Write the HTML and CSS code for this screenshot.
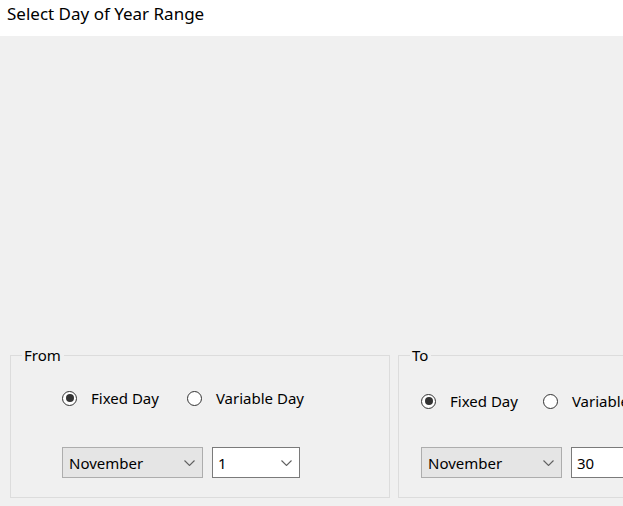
FILE: index.html
```html
<!DOCTYPE html>
<html>
<head>
<meta charset="utf-8">
<link rel="stylesheet" href="styles.css">
</head>
<body>
<div class="window">
  <div class="titlebar">Select Day of Year Range</div>
  <div class="client">
    <fieldset class="group group-from">
      <legend>From</legend>
      <div class="content">
        <div class="radios">
          <label class="radio"><span class="dot checked"></span><span>Fixed Day</span></label>
          <label class="radio"><span class="dot"></span><span>Variable Day</span></label>
        </div>
        <div class="combos">
          <div class="combo combo-month"><span>November</span><svg class="chev" viewBox="0 0 11 6" width="11" height="6"><path d="M0.5 0.5 L5.5 5.5 L10.5 0.5" fill="none" stroke="#606060" stroke-width="1.1"/></svg></div>
          <div class="combo combo-day"><span>1</span><svg class="chev" viewBox="0 0 11 6" width="11" height="6"><path d="M0.5 0.5 L5.5 5.5 L10.5 0.5" fill="none" stroke="#606060" stroke-width="1.1"/></svg></div>
        </div>
      </div>
    </fieldset>
    <fieldset class="group group-to">
      <legend>To</legend>
      <div class="content">
        <div class="radios">
          <label class="radio"><span class="dot checked"></span><span>Fixed Day</span></label>
          <label class="radio"><span class="dot"></span><span>Variable Day</span></label>
        </div>
        <div class="combos">
          <div class="combo combo-month"><span>November</span><svg class="chev" viewBox="0 0 11 6" width="11" height="6"><path d="M0.5 0.5 L5.5 5.5 L10.5 0.5" fill="none" stroke="#606060" stroke-width="1.1"/></svg></div>
          <div class="combo combo-day"><span>30</span><svg class="chev" viewBox="0 0 11 6" width="11" height="6"><path d="M0.5 0.5 L5.5 5.5 L10.5 0.5" fill="none" stroke="#606060" stroke-width="1.1"/></svg></div>
        </div>
      </div>
    </fieldset>
  </div>
</div>
</body>
</html>
```
FILE: styles.css
```css
html, body {
  margin: 0;
  padding: 0;
  width: 623px;
  height: 506px;
  overflow: hidden;
  background: #f0f0f0;
}
.window {
  font-family: "Noto Sans", "Open Sans", sans-serif;
  font-size: 15px;
  line-height: 20px;
  color: #000;
  height: 506px;
  display: flex;
  flex-direction: column;
}
.titlebar {
  height: 36px;
  background: #fff;
  padding-left: 7px;
  line-height: 28px;
  font-size: 17px;
  flex: none;
}
.client {
  flex: 1;
  display: flex;
  align-items: flex-end;
  gap: 8px;
  padding: 0 0 8px 10px;
}
.group {
  margin: 0;
  padding: 0 0 19px 0;
  min-width: 0;
  width: 380px;
  box-sizing: border-box;
  flex: none;
  border: 1px solid #dcdcdc;
}
.group legend {
  margin-left: 11px;
  padding: 0 3px 0 2px;
  line-height: 20px;
}
.group-from .content { padding-left: 51px; }
.group-to .content { padding-left: 22px; }
.radios {
  display: flex;
  align-items: center;
  height: 20px;
  margin-top: 23px;
}
.group-to .radios { margin-top: 26px; }
.radio {
  display: flex;
  align-items: center;
  gap: 14px;
  margin-right: 28px;
  white-space: nowrap;
}
.group-to .radio { margin-right: 25px; }
.dot {
  width: 15px;
  height: 15px;
  flex: none;
  box-sizing: border-box;
  border: 1px solid #333;
  border-radius: 50%;
  background: #fff;
  display: flex;
  align-items: center;
  justify-content: center;
}
.dot.checked::after {
  content: "";
  width: 8px;
  height: 8px;
  border-radius: 50%;
  background: #333;
}
.combos {
  display: flex;
  gap: 9px;
  margin-top: 39px;
}
.group-to .combos { margin-top: 36px; }
.combo {
  height: 31px;
  flex: none;
  box-sizing: border-box;
  display: flex;
  align-items: center;
  justify-content: space-between;
  padding: 0 7px 0 6px;
}
.combo-month {
  width: 141px;
  background: #e5e5e5;
  border: 1px solid #adadad;
}
.combo-day {
  width: 88px;
  background: #fff;
  border: 1px solid #7a7a7a;
  padding-left: 5px;
}
.chev { display: block; }
```
